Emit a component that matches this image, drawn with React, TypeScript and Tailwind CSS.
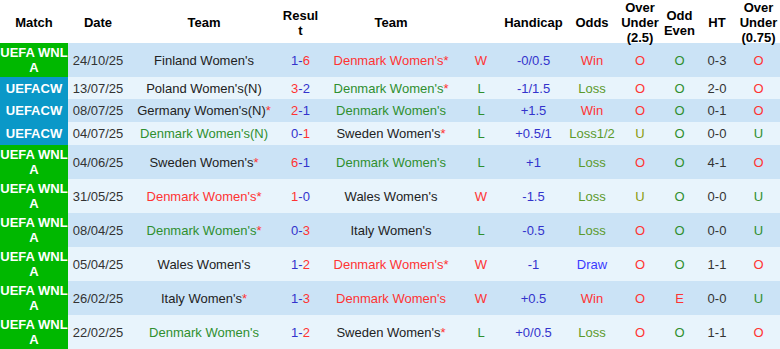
import React from "react"

type Tone = "k" | "r" | "g" | "b" | "o" | "d"

const tone: Record<Tone, string> = {
  k: "text-[#222222]",
  r: "text-[#ff3333]",
  g: "text-[#2f8f2f]",
  b: "text-[#3333cc]",
  o: "text-[#5b9a2b]",
  d: "text-[#3a3aff]",
}

type Team = { name: string; c: Tone; star?: boolean }

type Row = {
  league: "wnl" | "cw"
  date: string
  home: Team
  score: [number, number]
  away: Team
  wl: "W" | "L"
  hcp: string
  odds: string
  ou: string
  oe: string
  ht: string
  ou2: string
}

const rows: Row[] = [
  { league: "wnl", date: "24/10/25", home: { name: "Finland Women's", c: "k" }, score: [1, 6], away: { name: "Denmark Women's", c: "r", star: true }, wl: "W", hcp: "-0/0.5", odds: "Win", ou: "O", oe: "O", ht: "0-3", ou2: "O" },
  { league: "cw", date: "13/07/25", home: { name: "Poland Women's(N)", c: "k" }, score: [3, 2], away: { name: "Denmark Women's", c: "g", star: true }, wl: "L", hcp: "-1/1.5", odds: "Loss", ou: "O", oe: "O", ht: "2-0", ou2: "O" },
  { league: "cw", date: "08/07/25", home: { name: "Germany Women's(N)", c: "k", star: true }, score: [2, 1], away: { name: "Denmark Women's", c: "g" }, wl: "L", hcp: "+1.5", odds: "Win", ou: "O", oe: "O", ht: "0-1", ou2: "O" },
  { league: "cw", date: "04/07/25", home: { name: "Denmark Women's(N)", c: "g" }, score: [0, 1], away: { name: "Sweden Women's", c: "k", star: true }, wl: "L", hcp: "+0.5/1", odds: "Loss1/2", ou: "U", oe: "O", ht: "0-0", ou2: "U" },
  { league: "wnl", date: "04/06/25", home: { name: "Sweden Women's", c: "k", star: true }, score: [6, 1], away: { name: "Denmark Women's", c: "g" }, wl: "L", hcp: "+1", odds: "Loss", ou: "O", oe: "O", ht: "4-1", ou2: "O" },
  { league: "wnl", date: "31/05/25", home: { name: "Denmark Women's", c: "r", star: true }, score: [1, 0], away: { name: "Wales Women's", c: "k" }, wl: "W", hcp: "-1.5", odds: "Loss", ou: "U", oe: "O", ht: "0-0", ou2: "U" },
  { league: "wnl", date: "08/04/25", home: { name: "Denmark Women's", c: "g", star: true }, score: [0, 3], away: { name: "Italy Women's", c: "k" }, wl: "L", hcp: "-0.5", odds: "Loss", ou: "O", oe: "O", ht: "0-0", ou2: "U" },
  { league: "wnl", date: "05/04/25", home: { name: "Wales Women's", c: "k" }, score: [1, 2], away: { name: "Denmark Women's", c: "r", star: true }, wl: "W", hcp: "-1", odds: "Draw", ou: "O", oe: "O", ht: "1-1", ou2: "O" },
  { league: "wnl", date: "26/02/25", home: { name: "Italy Women's", c: "k", star: true }, score: [1, 3], away: { name: "Denmark Women's", c: "r" }, wl: "W", hcp: "+0.5", odds: "Win", ou: "O", oe: "E", ht: "0-0", ou2: "U" },
  { league: "wnl", date: "22/02/25", home: { name: "Denmark Women's", c: "g" }, score: [1, 2], away: { name: "Sweden Women's", c: "k", star: true }, wl: "L", hcp: "+0/0.5", odds: "Loss", ou: "O", oe: "O", ht: "1-1", ou2: "O" },
]

const grid = "grid grid-cols-[68px_60px_152px_41px_140px_40px_65px_52px_44px_35px_40px_43px]"

function TeamCell({ t }: { t: Team }) {
  return (
    <div className={`flex items-center justify-center text-center whitespace-nowrap ${tone[t.c]}`}>
      {t.name}
      {t.star && <span className="text-[#ff3333]">*</span>}
    </div>
  )
}

function oddsTone(s: string): Tone {
  if (s === "Win") return "r"
  if (s === "Draw") return "d"
  return "o"
}

export default function App() {
  return (
    <div className="w-[780px] h-[349px] overflow-hidden bg-white font-['Liberation_Sans',Arial,sans-serif] text-[13px] leading-[15px]">
      {/* header */}
      <div className={`${grid} h-[43px] font-bold text-black text-center`}>
        <div className="flex items-center justify-center">Match</div>
        <div className="flex items-center justify-center">Date</div>
        <div className="flex items-center justify-center">Team</div>
        <div className="flex items-center justify-center px-[2px]">Resul t</div>
        <div className="flex items-center justify-center">Team</div>
        <div></div>
        <div className="flex items-center justify-center">Handicap</div>
        <div className="flex items-center justify-center">Odds</div>
        <div className="flex items-center justify-center">Over Under (2.5)</div>
        <div className="flex items-center justify-center">Odd Even</div>
        <div className="flex items-center justify-center">HT</div>
        <div className="flex items-center justify-center">Over Under (0.75)</div>
      </div>

      {rows.map((r, i) => {
        const tall = r.league === "wnl"
        const [a, b] = r.score
        return (
          <div
            key={i}
            className={`${grid} ${tall ? "h-[34px]" : i === 1 ? "h-[22px]" : "h-[23px]"} ${i % 2 === 0 ? "bg-[#cbe3f6]" : "bg-[#e8f4fc]"}`}
          >
            <div
              className={`flex items-center justify-center text-center font-bold text-white ${r.league === "wnl" ? "bg-[#00b800]" : "bg-[#0a98c8]"}`}
            >
              {r.league === "wnl" ? "UEFA WNL A" : "UEFACW"}
            </div>
            <div className="flex items-center justify-center text-[#333333]">{r.date}</div>
            <TeamCell t={r.home} />
            <div className="flex items-center justify-center">
              <span className={a > b ? "text-[#ff3333]" : "text-[#3333cc]"}>{a}</span>
              <span className="text-[#3333cc]">-</span>
              <span className={b > a ? "text-[#ff3333]" : "text-[#3333cc]"}>{b}</span>
            </div>
            <TeamCell t={r.away} />
            <div className={`flex items-center justify-center ${r.wl === "W" ? tone.r : tone.g}`}>{r.wl}</div>
            <div className="flex items-center justify-center text-[#3333cc]">{r.hcp}</div>
            <div className={`flex items-center justify-center ${tone[oddsTone(r.odds)]}`}>{r.odds}</div>
            <div className={`flex items-center justify-center ${r.ou === "O" ? tone.r : "text-[#8a9a10]"}`}>{r.ou}</div>
            <div className={`flex items-center justify-center ${r.oe === "O" ? tone.g : tone.r}`}>{r.oe}</div>
            <div className="flex items-center justify-center text-[#333333]">{r.ht}</div>
            <div className={`flex items-center justify-center ${r.ou2 === "O" ? tone.r : tone.g}`}>{r.ou2}</div>
          </div>
        )
      })}
    </div>
  )
}
